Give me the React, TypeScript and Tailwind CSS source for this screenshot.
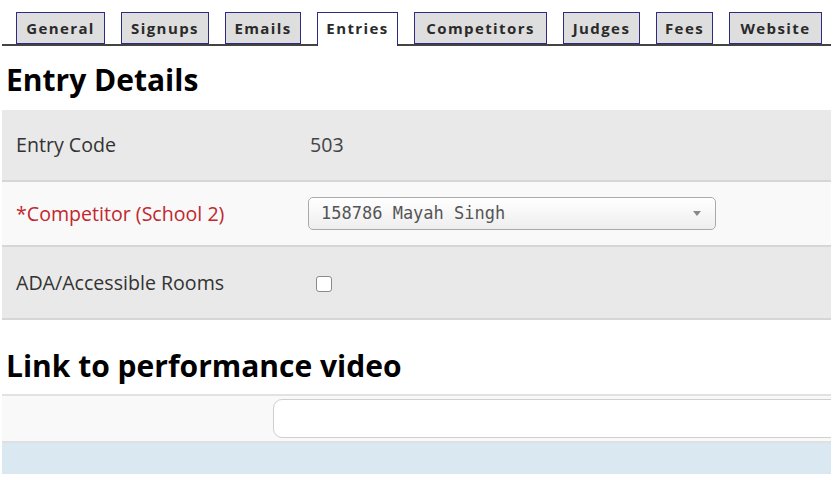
export default function App() {
  const tabs = [
    { label: "General", w: "w-[89px]" },
    { label: "Signups", w: "w-[88px]" },
    { label: "Emails", w: "w-[76px]" },
    { label: "Entries", w: "w-[81px]", active: true },
    { label: "Competitors", w: "w-[133px]" },
    { label: "Judges", w: "w-[77px]" },
    { label: "Fees", w: "w-[57px]" },
    { label: "Website", w: "w-[93px]" },
  ];

  return (
    <div className="w-[837px] h-[480px] bg-white overflow-hidden font-['Open_Sans',sans-serif] text-[#333]">
      <div className="ml-[2px] w-[829px] overflow-hidden">
        {/* tab strip */}
        <div className="flex items-end gap-[16px] pl-[14px] pt-[12px] border-b-2 border-[#444] h-[46px]">
          {tabs.map((t) =>
            t.active ? (
              <div
                key={t.label}
                className={`${t.w} h-[34px] -mb-[2px] pb-[2px] flex items-center justify-center bg-white border border-b-0 border-[#2e2b80] text-[15px] font-bold tracking-[1.4px] text-[#2a2a2a]`}
              >
                {t.label}
              </div>
            ) : (
              <div
                key={t.label}
                className={`${t.w} h-[32px] flex items-center justify-center bg-[#dedede] border border-[#2e2b80] text-[15px] font-bold tracking-[1.4px] text-[#2a2a2a]`}
              >
                {t.label}
              </div>
            )
          )}
        </div>

        {/* Entry details */}
        <h1 className="mt-[16px] mb-[12px] pl-[4px] font-bold text-[30px] leading-[36px] text-black">
          Entry Details
        </h1>

        <div className="text-[19.6px]">
          <div className="h-[72px] flex items-center bg-[#e9e9e9] border-b-2 border-[#d6d6d6]">
            <div className="w-[306px] pl-[14px]">Entry Code</div>
            <div className="pl-[2px] text-[#444]">503</div>
          </div>
          <div className="h-[65px] flex items-center bg-[#f9f9f9] border-b-2 border-[#d6d6d6]">
            <div className="w-[306px] pl-[14px] text-[#c1272d]">*Competitor (School 2)</div>
            <div className="w-[408px] h-[33px] flex items-center justify-between pl-[12px] pr-[14px] rounded-[5px] border border-[#aaa] bg-gradient-to-b from-white to-[#eeeeee] font-['DejaVu_Sans_Mono',monospace] text-[17px] text-[#555]">
              <span>158786 Mayah Singh</span>
              <svg width="8" height="5" viewBox="0 0 8 5">
                <path d="M0 0 L8 0 L4 5 Z" fill="#888" />
              </svg>
            </div>
          </div>
          <div className="h-[73px] flex items-center bg-[#e9e9e9] border-b-2 border-[#d6d6d6]">
            <div className="w-[306px] pl-[14px]">ADA/Accessible Rooms</div>
            <div className="ml-[8px] mt-[2px] w-[16px] h-[16px] rounded-[3px] border-[1.5px] border-[#8a8a8a] bg-white" />
          </div>
        </div>

        {/* video link */}
        <h2 className="mt-[28px] mb-[10px] pl-[4px] font-bold text-[30px] leading-[36px] text-black">
          Link to performance video
        </h2>

        <div className="border-t-2 border-[#e2e2e2]">
          <div className="h-[47px] flex items-center bg-[#f9f9f9] border-b-2 border-[#e0e0e0]">
            <div className="w-[271px] shrink-0" />
            <div className="w-[600px] shrink-0 h-[39px] rounded-[9px] border border-[#cfcfcf] bg-white" />
          </div>
          <div className="h-[31px] bg-[#dae9f1]" />
        </div>
      </div>
    </div>
  );
}
